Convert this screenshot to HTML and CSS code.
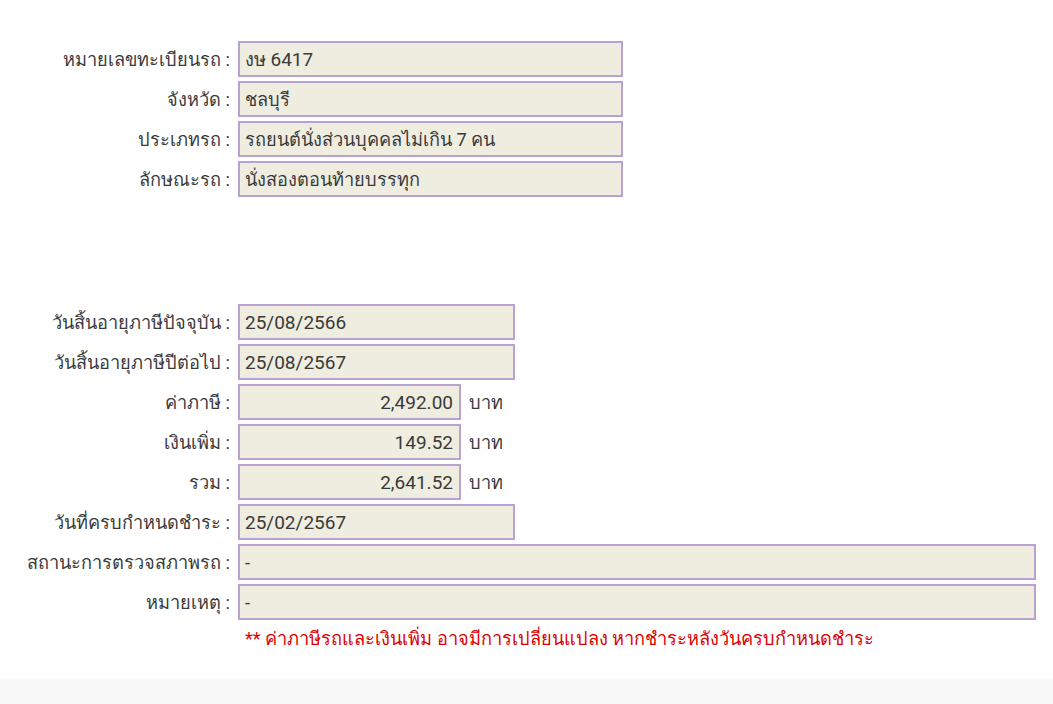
FILE: index.html
```html
<!DOCTYPE html>
<html lang="th">
<head>
<meta charset="utf-8">
<link rel="stylesheet" href="styles.css">
</head>
<body>
<div class="page">
  <div class="group group-top">
    <div class="row"><label class="lbl">หมายเลขทะเบียนรถ :</label><div class="box w-384">งษ <span class="digits">6417</span></div></div>
    <div class="row"><label class="lbl">จังหวัด :</label><div class="box w-384">ชลบุรี</div></div>
    <div class="row"><label class="lbl">ประเภทรถ :</label><div class="box w-384">รถยนต์นั่งส่วนบุคคลไม่เกิน 7 คน</div></div>
    <div class="row"><label class="lbl">ลักษณะรถ :</label><div class="box w-384">นั่งสองตอนท้ายบรรทุก</div></div>
  </div>
  <div class="group group-bottom">
    <div class="row"><label class="lbl">วันสิ้นอายุภาษีปัจจุบัน :</label><div class="box w-276 digits">25/08/2566</div></div>
    <div class="row"><label class="lbl">วันสิ้นอายุภาษีปีต่อไป :</label><div class="box w-276 digits">25/08/2567</div></div>
    <div class="row"><label class="lbl">ค่าภาษี :</label><div class="box w-222 num digits">2,492.00</div><span class="unit">บาท</span></div>
    <div class="row"><label class="lbl">เงินเพิ่ม :</label><div class="box w-222 num digits">149.52</div><span class="unit">บาท</span></div>
    <div class="row"><label class="lbl">รวม :</label><div class="box w-222 num digits">2,641.52</div><span class="unit">บาท</span></div>
    <div class="row"><label class="lbl">วันที่ครบกำหนดชำระ :</label><div class="box w-276 digits">25/02/2567</div></div>
    <div class="row"><label class="lbl">สถานะการตรวจสภาพรถ :</label><div class="box w-797">-</div></div>
    <div class="row"><label class="lbl">หมายเหตุ :</label><div class="box w-797">-</div></div>
    <div class="row note-row"><span class="lbl"></span><p class="note">** ค่าภาษีรถและเงินเพิ่ม อาจมีการเปลี่ยนแปลง หากชำระหลังวันครบกำหนดชำระ</p></div>
  </div>
</div>
<footer class="footer"></footer>
</body>
</html>
```
FILE: styles.css
```css
html, body {
  margin: 0;
  padding: 0;
  background: #ffffff;
}
body {
  font-family: Roboto, "Noto Sans", "DejaVu Sans", sans-serif;
  font-size: 18.2px;
  color: #3a3a3a;
}
.page {
  padding-top: 41px;
  padding-bottom: 27px;
}
.group {
  display: flex;
  flex-direction: column;
  gap: 4px;
}
.group-bottom {
  margin-top: 107px;
}
.row {
  display: flex;
  align-items: center;
  height: 36px;
}
.lbl {
  width: 230px;
  flex: none;
  text-align: right;
  padding-right: 8px;
  white-space: nowrap;
}
.box {
  height: 36px;
  box-sizing: border-box;
  border: 2px solid #b9a2d2;
  background: #eeede0;
  padding: 0 6px 0 5px;
  display: flex;
  align-items: center;
  white-space: pre;
}
.digits {
  font-size: 19px;
}
.num {
  justify-content: flex-end;
}
.w-384 { width: 385px; }
.w-276 { width: 277px; }
.w-222 { width: 223px; }
.w-797 { width: 798px; }
.unit {
  margin-left: 8px;
}
.note-row {
  height: 28px;
}
.note {
  margin: 0 0 0 7px;
  color: #dd0000;
}
.footer {
  height: 26px;
  background: #f8f8f8;
}
```
